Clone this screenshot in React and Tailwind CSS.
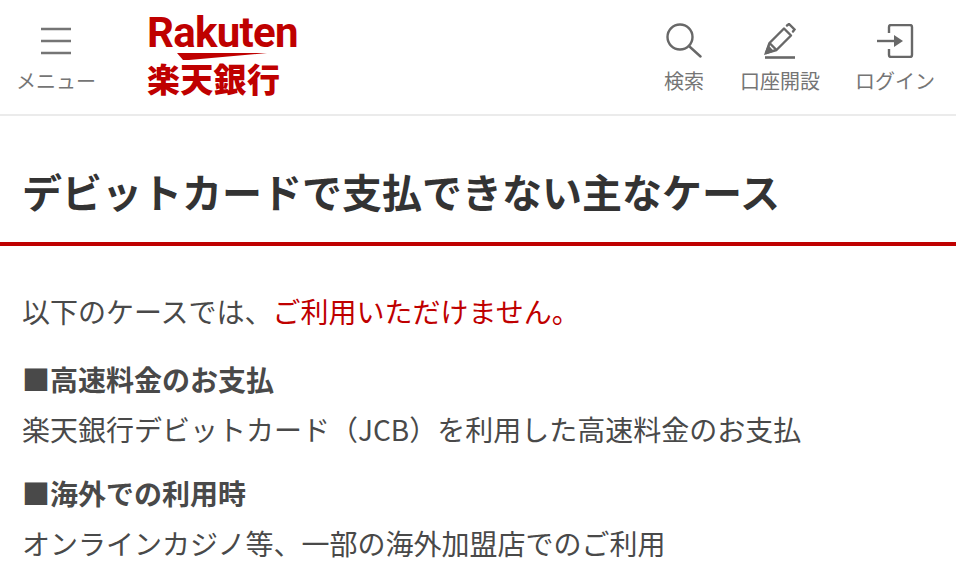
const font = { fontFamily: '"Noto Sans CJK JP", sans-serif' };

const HeaderItem = ({ label, icon, className }) => (
  <div className={`flex flex-col items-center ${className}`}>
    <div className="h-[44px] flex items-center justify-center">{icon}</div>
    <span className="mt-[3px] text-[20px] leading-[30px] text-[#757575] whitespace-nowrap">{label}</span>
  </div>
);

const MenuIcon = () => (
  <svg width="32" height="28" viewBox="0 0 32 28" fill="none" stroke="#757575" strokeWidth="2.4">
    <path d="M1 2h30M1 14h30M1 26h30" />
  </svg>
);

const SearchIcon = () => (
  <svg width="36" height="36" viewBox="0 0 36 36" fill="none" stroke="#686868" strokeWidth="2.4">
    <circle cx="14" cy="14" r="12.5" />
    <path d="M24 24l10.500 9.500" strokeLinecap="round" />
  </svg>
);

const PenIcon = () => (
  <svg width="32" height="36" viewBox="0 0 32 36" fill="none" stroke="#686868" strokeWidth="2.4">
    <path d="M2 30l3.500-10L20 5.500l7 7L12.500 27z" strokeLinejoin="round" />
    <path d="M5.500 20l7 7" />
    <path d="M2 30l6-2-3.500-4z" fill="#686868" />
    <path d="M23 2.500l2-1.500 5.500 5.500-1.500 2" strokeLinecap="round" />
    <path d="M1 34.500h30" strokeWidth="2.600" />
  </svg>
);

const LoginIcon = () => (
  <svg width="38" height="34" viewBox="0 0 38 34" fill="none" stroke="#686868" strokeWidth="2.4">
    <path d="M13 9V3a2 2 0 0 1 2-2h19a2 2 0 0 1 2 2v28a2 2 0 0 1-2 2H15a2 2 0 0 1-2-2v-6" strokeLinejoin="round" />
    <path d="M1 17h18" />
    <path d="M18 11l9 6-9 6z" fill="#686868" stroke="none" />
  </svg>
);

const Logo = () => (
  <div className="flex flex-col items-start text-[#bf0000] w-[150px]">
    <span className="text-[42px] leading-[34px] h-[34px] tracking-[-0.7px] font-bold" style={{ fontFamily: 'Roboto, sans-serif' }}>Rakuten</span>
    <svg width="90" height="7" viewBox="0 0 90 7" className="ml-[30px] mt-[3px] block">
      <path d="M0 0h90L12 7H6z" fill="#bf0000" />
    </svg>
    <span className="mt-[0px] text-[33px] leading-[36px] font-black tracking-[0.3px]">楽天銀行</span>
  </div>
);

export default function App() {
  return (
    <div className="w-[956px] h-[580px] overflow-hidden bg-white text-[#333]" style={font}>
      <header className="h-[116px] border-b-2 border-[#ebebeb] flex items-start pt-[19px]">
        <HeaderItem label="メニュー" icon={<MenuIcon />} className="w-[80px] ml-[16px]" />
        <div className="ml-[51px] -mt-[3px]"><Logo /></div>
        <HeaderItem label="検索" icon={<SearchIcon />} className="w-[40px] ml-[367px]" />
        <HeaderItem label="口座開設" icon={<PenIcon />} className="w-[80px] ml-[36px]" />
        <HeaderItem label="ログイン" icon={<LoginIcon />} className="w-[80px] ml-[35px]" />
      </header>

      <h1 className="h-[130px] border-b-4 border-[#bf0000] pl-[22px] pt-[47px] text-[40px] leading-[56px] font-bold text-[#333]">
        デビットカードで支払できない主なケース
      </h1>

      <main className="px-[22px] pt-[45px] text-[28px] text-[#494949] leading-[40px]">
        <p>以下のケースでは、<span className="text-[#bf0000]">ご利用いただけません。</span></p>
        <p className="mt-[28px] font-bold">■高速料金のお支払</p>
        <p className="mt-[10px]">楽天銀行デビットカード（JCB）を利用した高速料金のお支払</p>
        <p className="mt-[24px] font-bold">■海外での利用時</p>
        <p className="mt-[10px]">オンラインカジノ等、一部の海外加盟店でのご利用</p>
      </main>
    </div>
  );
}
